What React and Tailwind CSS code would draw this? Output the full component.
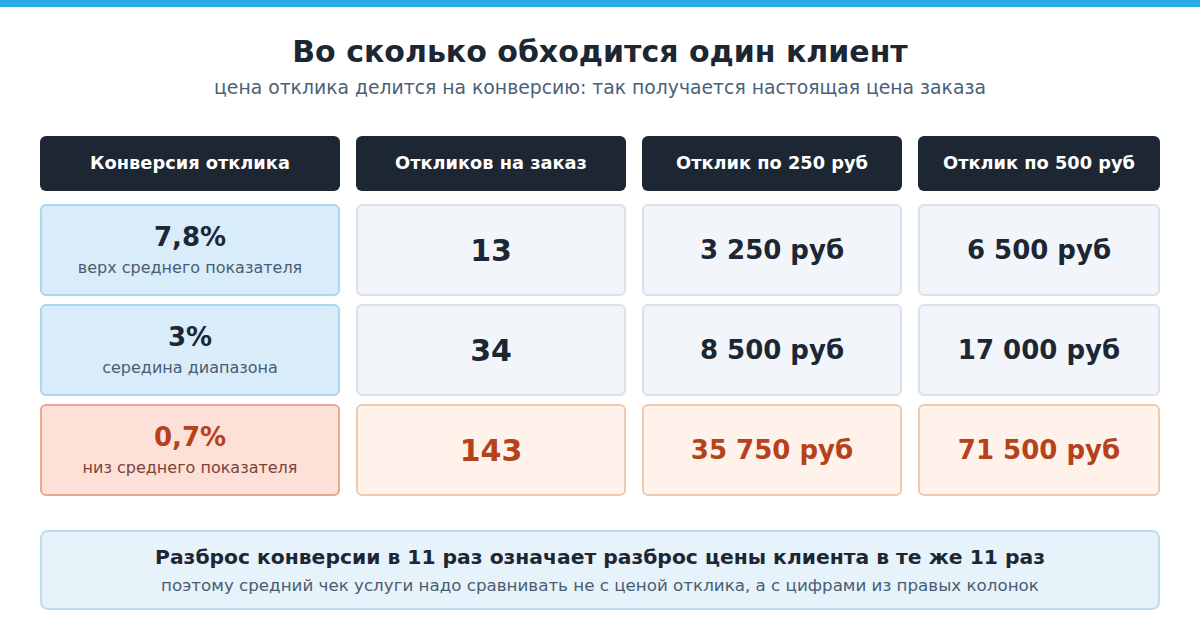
import React from "react";

const headers = ["Конверсия отклика", "Откликов на заказ", "Отклик по 250 руб", "Отклик по 500 руб"];

const rows = [
  { rate: "7,8%", note: "верх среднего показателя", count: "13", p250: "3 250 руб", p500: "6 500 руб", tone: "blue" },
  { rate: "3%", note: "середина диапазона", count: "34", p250: "8 500 руб", p500: "17 000 руб", tone: "blue" },
  { rate: "0,7%", note: "низ среднего показателя", count: "143", p250: "35 750 руб", p500: "71 500 руб", tone: "red" },
];

const App = () => {
  return (
    <div
      className="w-[1200px] h-[640px] bg-white overflow-hidden"
      style={{ fontFamily: '"DejaVu Sans", Verdana, sans-serif' }}
    >
      <div className="h-[7px] bg-[#2aabe8]" />

      {/* Title */}
      <div className="flex flex-col items-center pt-[27px]">
        <h1 className="text-[30px] leading-[36px] font-bold text-[#1c2733]">Во сколько обходится один клиент</h1>
        <p className="mt-[6px] text-[18.8px] leading-[24px] text-[#4a6177]">
          цена отклика делится на конверсию: так получается настоящая цена заказа
        </p>
      </div>

      {/* Table */}
      <div className="mx-[40px] mt-[36px] grid grid-cols-[300px_270px_260px_242px] gap-x-[16px] gap-y-[8px]">
        {headers.map((h) => (
          <div
            key={h}
            className="h-[55px] mb-[5px] rounded-[6px] bg-[#1c2733] flex items-center justify-center text-[17.8px] font-bold text-white"
          >
            {h}
          </div>
        ))}

        {rows.map((r) => {
          const red = r.tone === "red";
          const cell = red
            ? "bg-[#fef2ea] border-[#efc9ae] text-[#b5421b]"
            : "bg-[#f2f6fa] border-[#d8e2eb] text-[#1c2733]";
          return (
            <React.Fragment key={r.rate}>
              <div
                className={`h-[92px] rounded-[6px] border-2 flex flex-col items-center justify-center ${
                  red ? "bg-[#fde0d8] border-[#e9a78f]" : "bg-[#d9ecfa] border-[#acd5ef]"
                }`}
              >
                <div className={`text-[26px] leading-[30px] font-bold ${red ? "text-[#b5421b]" : "text-[#1c2733]"}`}>
                  {r.rate}
                </div>
                <div className={`mt-[6px] text-[16px] leading-[20px] ${red ? "text-[#7a4537]" : "text-[#4a5d70]"}`}>
                  {r.note}
                </div>
              </div>
              <div className={`h-[92px] rounded-[6px] border-2 flex items-center justify-center text-[30px] font-bold ${cell}`}>
                {r.count}
              </div>
              <div className={`h-[92px] rounded-[6px] border-2 flex items-center justify-center text-[26px] font-bold ${cell}`}>
                {r.p250}
              </div>
              <div className={`h-[92px] rounded-[6px] border-2 flex items-center justify-center text-[26px] font-bold ${cell}`}>
                {r.p500}
              </div>
            </React.Fragment>
          );
        })}
      </div>

      {/* Summary */}
      <div className="mx-[40px] mt-[34px] h-[80px] rounded-[8px] border-2 border-[#bcdcef] bg-[#e6f3fb] flex flex-col items-center justify-center">
        <div className="text-[20.3px] leading-[26px] font-bold text-[#1c2733]">
          Разброс конверсии в 11 раз означает разброс цены клиента в те же 11 раз
        </div>
        <div className="mt-[4px] text-[16.7px] leading-[22px] text-[#4a5d70]">
          поэтому средний чек услуги надо сравнивать не с ценой отклика, а с цифрами из правых колонок
        </div>
      </div>
    </div>
  );
};

export default App;
